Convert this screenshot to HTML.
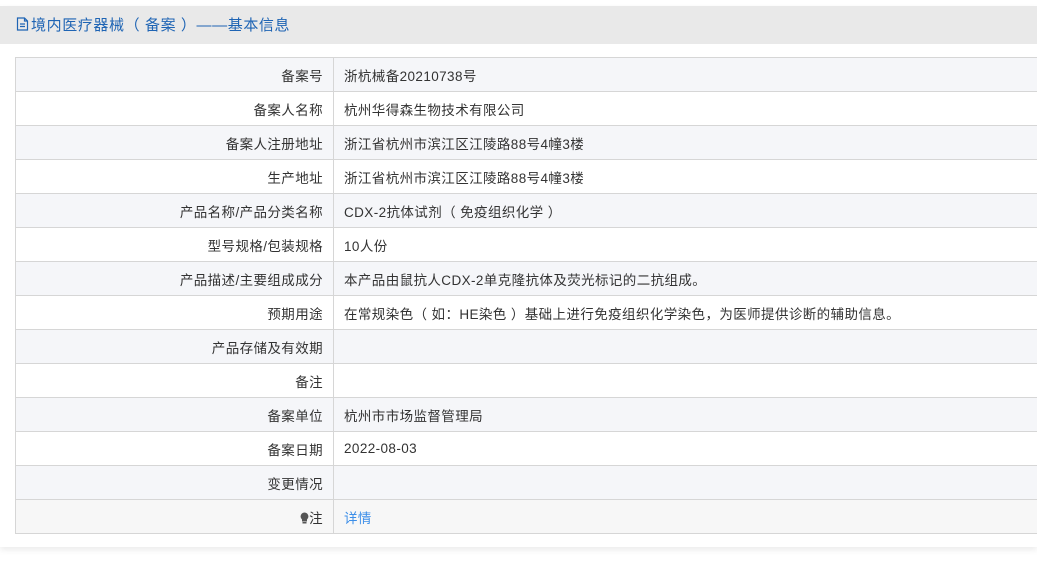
<!DOCTYPE html>
<html><head><meta charset="utf-8"><style>
body{margin:0;background:#fff;font-family:"Liberation Sans","Noto Sans CJK SC",sans-serif;width:1037px;height:563px;overflow:hidden;}
.wrap{position:absolute;left:0;top:6px;width:1037px;height:541px;background:#fff;box-shadow:0 3px 6px rgba(0,0,0,0.08);}
.hd{height:38px;background:#e9e9e9;color:#1e64b4;font-size:15px;line-height:40px;padding-left:16px;letter-spacing:0.6px;}
table{position:absolute;left:15px;top:51px;width:1030px;border-collapse:collapse;font-size:13.5px;color:#333;letter-spacing:0.4px;}
td{height:33px;border:1px solid #d6d6d6;padding:0 10px;}
td.l{width:297px;text-align:right;}
tr:nth-child(odd) td{background:#f5f6f9;}
tr:nth-child(even) td{background:#fff;}
tr.last td{background:#f7f7f7;}
a{color:#3b8ee8;text-decoration:none;}
</style></head><body>
<div class="wrap">
<div class="hd"><svg width="13" height="14" viewBox="0 0 13 14" style="vertical-align:-1px;margin-right:2px"><path d="M1.5 1h7l3 3v9h-10z M8.5 1v3h3 M4 7h5 M4 9.5h5" fill="none" stroke="#1e64b4" stroke-width="1.2"/></svg>境内医疗器械（ 备案 ）——基本信息</div>
<table>
<tr><td class="l">备案号</td><td>浙杭械备20210738号</td></tr>
<tr><td class="l">备案人名称</td><td>杭州华得森生物技术有限公司</td></tr>
<tr><td class="l">备案人注册地址</td><td>浙江省杭州市滨江区江陵路88号4幢3楼</td></tr>
<tr><td class="l">生产地址</td><td>浙江省杭州市滨江区江陵路88号4幢3楼</td></tr>
<tr><td class="l">产品名称/产品分类名称</td><td>CDX-2抗体试剂（ 免疫组织化学 ）</td></tr>
<tr><td class="l">型号规格/包装规格</td><td>10人份</td></tr>
<tr><td class="l">产品描述/主要组成成分</td><td>本产品由鼠抗人CDX-2单克隆抗体及荧光标记的二抗组成。</td></tr>
<tr><td class="l">预期用途</td><td>在常规染色（ 如：HE染色 ）基础上进行免疫组织化学染色，为医师提供诊断的辅助信息。</td></tr>
<tr><td class="l">产品存储及有效期</td><td></td></tr>
<tr><td class="l">备注</td><td></td></tr>
<tr><td class="l">备案单位</td><td>杭州市市场监督管理局</td></tr>
<tr><td class="l">备案日期</td><td>2022-08-03</td></tr>
<tr><td class="l">变更情况</td><td></td></tr>
<tr class="last"><td class="l"><svg width="9" height="12" viewBox="0 0 9 12" style="vertical-align:-1px"><path d="M4.5 0.5a4 4 0 0 1 2.5 7v2h-5v-2a4 4 0 0 1 2.5-7z" fill="#555"/><rect x="2.5" y="10" width="4" height="1.5" fill="#555"/></svg>注</td><td><a>详情</a></td></tr>
</table>
</div>
</body></html>
